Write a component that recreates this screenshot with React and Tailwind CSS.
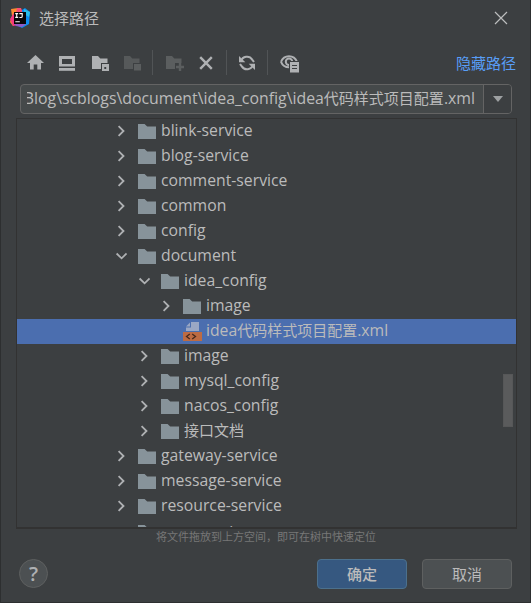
import React from "react";

const CHEVRON_COLOR = "#afb1b3";

function Chevron({ state }) {
  return (
    <svg width="12" height="12" viewBox="0 0 12 12" fill="none" stroke={CHEVRON_COLOR} strokeWidth="1.8" className="shrink-0">
      {state === "open" ? <path d="M1.6 3.5 6.6 8.3 11.6 3.5" /> : null}
      {state === "closed" ? <path d="M3.6 1.2 8.5 6 3.6 10.8" /> : null}
    </svg>
  );
}

function Folder() {
  return (
    <svg width="18" height="15" viewBox="0 0 18 15" className="shrink-0">
      <path d="M0 0H6.6L9.2 2.5H18V15H0Z" fill="#87939a" />
    </svg>
  );
}

function XmlFile() {
  return (
    <svg width="19" height="19" viewBox="0 0 19 19" className="shrink-0">
      <path d="M8 0H16V9H3V5.5H8Z" fill="#9aa7c4" />
      <path d="M3 4.5 7 .5V4.5Z" fill="#9aa7c4" />
      <rect y="10" width="19" height="9" fill="#bd6b43" />
      <path d="M6.8 11.9 3.5 14.5 6.8 17.1M9.2 11.9 12.5 14.5 9.2 17.1" fill="none" stroke="#45291d" strokeWidth="1.3" />
    </svg>
  );
}

const ROWS = [
  ["blink-service", 0, "closed"],
  ["blog-service", 0, "closed"],
  ["comment-service", 0, "closed"],
  ["common", 0, "closed"],
  ["config", 0, "closed"],
  ["document", 0, "open"],
  ["idea_config", 1, "open"],
  ["image", 2, "closed"],
  ["idea代码样式项目配置.xml", 2, "file"],
  ["image", 1, "closed"],
  ["mysql_config", 1, "closed"],
  ["nacos_config", 1, "closed"],
  ["接口文档", 1, "closed"],
  ["gateway-service", 0, "closed"],
  ["message-service", 0, "closed"],
  ["resource-service", 0, "closed"],
  ["user-service", 0, "closed"],
];

const INDENT = ["pl-[98px]", "pl-[121px]", "pl-[143px]"];

// Chinese runs are set slightly smaller than the Latin text beside them.
function Label({ text }) {
  return text.split(/([\u4e00-\u9fff]+)/).map((part, i) =>
    i % 2 ? <span key={i} className="text-[15px]">{part}</span> : part
  );
}

function Row({ row }) {
  const [label, level, state] = row;
  const file = state === "file";
  return (
    <div className={"flex h-[25px] shrink-0 items-center pb-px last-of-type:pt-[2px] last-of-type:pb-0 " + INDENT[level] + (file ? " bg-[#4b6eaf]" : "")}>
      <Chevron state={state} />
      <span className="ml-[11px] flex w-[23px] shrink-0 items-center">{file ? <XmlFile /> : <Folder />}</span>
      <span className="whitespace-nowrap pb-px text-[15.75px] leading-[23px]"><Label text={label} /></span>
    </div>
  );
}

function Divider() {
  return <span className="h-[25px] w-px bg-[#515456]" />;
}

function FolderShape({ color, children }) {
  return (
    <svg width="18" height="16" viewBox="0 0 18 16">
      <path d="M0 1H6L8.3 3.5H15.5V8H9V14H0Z" fill={color} />
      {children}
    </svg>
  );
}

function Toolbar() {
  return (
    <div className="flex h-[25px] items-center pl-[27px]">
      <svg width="17" height="15" viewBox="0 0 17 15" fill="#afb1b3">
        <path d="M8.5 0 17 8H14V14.5H10.3V9.5H6.7V14.5H3V8H0Z" />
      </svg>
      <svg width="16" height="15" viewBox="0 0 16 15" className="ml-[15px] mt-px">
        <path d="M0 0H16V10.5H0ZM3 3V8H13V3Z" fillRule="evenodd" fill="#afb1b3" />
        <rect y="12" width="16" height="2.8" fill="#afb1b3" />
      </svg>
      <span className="ml-[17px] mt-px">
        <FolderShape color="#afb1b3">
          <path d="M10 9H17V16H10ZM12.3 12V14H14.2V12Z" fillRule="evenodd" fill="#afb1b3" />
        </FolderShape>
      </span>
      <span className="ml-[14px] mt-px">
        <FolderShape color="#56595a">
          <rect x="10" y="9" width="7" height="6.5" fill="#5b5e5f" />
        </FolderShape>
      </span>
      <span className="ml-[10px] flex"><Divider /></span>
      <span className="ml-[13px] mt-px">
        <FolderShape color="#5b5e5f">
          <path d="M14 8V16M10 12H18" stroke="#5b5e5f" strokeWidth="2.4" />
        </FolderShape>
      </span>
      <svg width="14" height="14" viewBox="0 0 14 14" className="ml-[15px]" stroke="#afb1b3" strokeWidth="2.4">
        <path d="M1.2 1.2 12.8 12.8M12.8 1.2 1.2 12.8" />
      </svg>
      <span className="ml-[13px] flex"><Divider /></span>
      <svg width="16" height="16" viewBox="0 0 16 16" className="ml-[12px]" fill="none" stroke="#afb1b3" strokeWidth="2">
        <path d="M2 6.2A6.2 6.2 0 0 1 13.2 4.6L15 7M14 9.8A6.2 6.2 0 0 1 2.8 11.4L1 9" />
        <path d="M0 1V7.3H6.3ZM16 15V8.7H9.7Z" fill="#afb1b3" stroke="none" />
      </svg>
      <span className="ml-[12px] flex"><Divider /></span>
      <svg width="20" height="18" viewBox="0 0 20 18" className="ml-[12px] mt-[2px]">
        <path d="M1 6.8C4-.5 14-.5 17 6.8M1 6.8C2.7 10.8 5.5 12.3 9 12.3" fill="none" stroke="#afb1b3" strokeWidth="2" />
        <circle cx="9" cy="6.7" r="3.2" fill="none" stroke="#afb1b3" strokeWidth="2" />
        <rect x="9" y="6" width="11" height="12" fill="#3c3f41" />
        <rect x="10" y="7" width="9" height="10.5" fill="#afb1b3" />
        <path d="M12 10.5H17M12 13.5H17" stroke="#3c3f41" strokeWidth="1.2" />
      </svg>
      <span className="ml-auto mr-[14px] pt-[2px] text-[15px] text-[#589df6]">隐藏路径</span>
    </div>
  );
}

function Logo() {
  return (
    <svg width="20" height="20" viewBox="0 0 20 20">
      <path d="M1 1 8 0 10 9 3 18 0 14 2 8Z" fill="#fc8b31" />
      <path d="M0 11 4 5 9 17 3 18Z" fill="#f5377f" />
      <path d="M7 0H11L13 5 6 5Z" fill="#fb4d73" />
      <path d="M12 2 15 0 20 4 19 16 12 20 6 17 12 12Z" fill="#0b8cf0" />
      <path d="M14 1 20 4 19 9 14 6Z" fill="#29bdea" />
      <path d="M4 16H16L12 19 6 18Z" fill="#9259c5" />
      <rect x="4" y="4" width="12" height="12" fill="#090608" />
      <path d="M5.2 5.6H8.2M6.7 5.6V9.4M5.2 9.4H8.2M9.3 5.6H12.2V8.5Q12.2 9.5 11 9.5H9.4M5.3 13.8H9.8" fill="none" stroke="#fff" strokeWidth="1.1" />
    </svg>
  );
}

export default function App() {
  return (
    <div className="flex h-[603px] w-[531px] flex-col overflow-hidden border-x border-b border-[#2d2f30] bg-[#3c3f41] font-['Open_Sans','Noto_Sans_CJK_SC',sans-serif] text-[#bbbbbb]">
      <header className="flex h-[36px] shrink-0 items-center pl-[9px]">
        <Logo />
        <span className="ml-[9px] text-[15px]">选择路径</span>
        <svg width="14" height="14" viewBox="0 0 14 14" className="ml-auto mr-[22px]" stroke="#bcbdbe" strokeWidth="1.2">
          <path d="M1 1 13 13M13 1 1 13" />
        </svg>
      </header>
      <div className="mt-[14px] -ml-px shrink-0"><Toolbar /></div>
      <div className="ml-[19px] mt-[9px] flex h-[30px] w-[492px] shrink-0 rounded-[4px] border border-[#646464] bg-[#45494a]">
        <div className="ml-[6px] flex w-[448px] justify-end overflow-hidden">
          <span className="whitespace-nowrap text-[15.85px] leading-[27px]"><Label text="Blog\scblogs\document\idea_config\idea代码样式项目配置.xml" /></span>
        </div>
        <div className="ml-auto flex w-[28px] items-center justify-center rounded-r-[3px] border-l border-[#646464] bg-[#3c3f41]">
          <svg width="10" height="6" viewBox="0 0 10 6"><path d="M0 0H10L5 6Z" fill="#9da0a2" /></svg>
        </div>
      </div>
      <div className="ml-[15px] mt-[4px] flex h-[411px] w-[501px] shrink-0 border border-b-2 border-[#323232]">
        <div className="flex w-full flex-col overflow-hidden">
          <div className="relative flex flex-col">
            {ROWS.map((row, i) => <Row key={i} row={row} />)}
            <span className="absolute right-[3px] top-[255px] h-[53px] w-[10px] border border-[#565758] bg-[#5a5b5c]" />
          </div>
        </div>
      </div>
      <div className="h-[17px] shrink-0 pl-px text-center text-[11px] leading-[16px] text-[#777777]">将文件拖放到上方空间，即可在树中快速定位</div>
      <footer className="mt-[12px] flex h-[32px] shrink-0 items-center pb-px pl-[18px]">
        <button className="flex size-[29px] items-center justify-center rounded-full border border-[#5e6060] bg-[#4c5052] text-[20px] font-semibold leading-none text-[#afb1b3]">?</button>
        <button className="ml-auto h-[30px] w-[90px] rounded-[4px] border border-[#4c708c] bg-[#365880] text-[15px] font-medium leading-[28px]">确定</button>
        <button className="ml-[15px] mr-[18px] h-[30px] w-[90px] rounded-[4px] border border-[#5e6060] bg-[#4c5052] text-[15px] leading-[28px]">取消</button>
      </footer>
    </div>
  );
}
